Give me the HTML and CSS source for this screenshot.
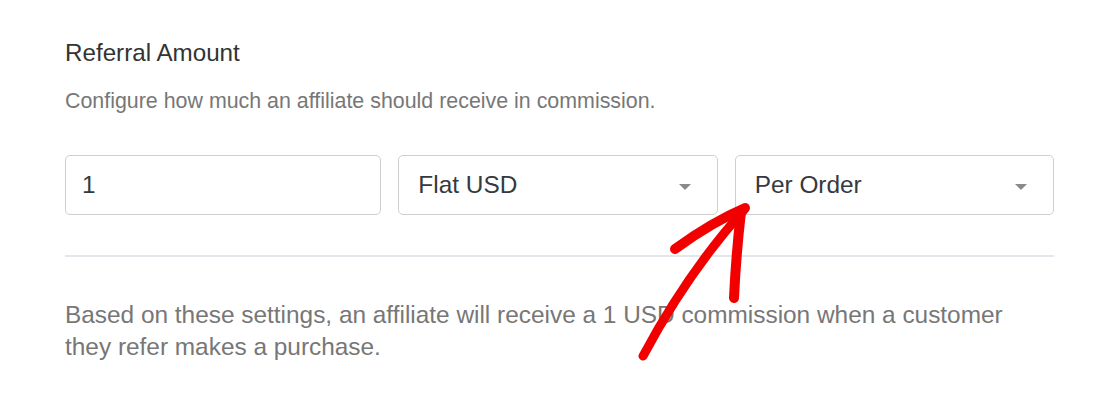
FILE: index.html
```html
<!DOCTYPE html>
<html>
<head>
<meta charset="utf-8">
<link rel="stylesheet" href="styles.css">
</head>
<body>
<div class="page">
  <h2 class="title">Referral Amount</h2>
  <p class="desc">Configure how much an affiliate should receive in commission.</p>
  <div class="fields">
    <div class="field">1</div>
    <div class="field select">Flat USD<span class="caret"></span></div>
    <div class="field select">Per Order<span class="caret"></span></div>
  </div>
  <hr class="divider">
  <p class="summary">Based on these settings, an affiliate will receive a 1 USD commission when a customer they refer makes a purchase.</p>
  <svg class="arrow" viewBox="630 195 130 175" width="130" height="175">
    <g fill="none" stroke="#f20000" stroke-linecap="round" stroke-linejoin="round">
      <path d="M643,356 Q688,272 744,210" stroke-width="9"/>
      <path d="M675,249 Q712,222 745,208" stroke-width="10"/>
      <path d="M741,212 Q736,255 734,298" stroke-width="10"/>
    </g>
  </svg>
</div>
</body>
</html>
```
FILE: styles.css
```css
html, body {
  margin: 0;
  padding: 0;
  background: #fff;
}
body {
  font-family: "Liberation Sans", Arial, sans-serif;
}
.page {
  position: relative;
  width: 989px;
  padding: 39px 0 0 65px;
}
.title {
  margin: 0;
  font-size: 24.2px;
  line-height: 28px;
  font-weight: normal;
  color: #333;
}
.desc {
  margin: 21px 0 0;
  font-size: 21.4px;
  line-height: 26px;
  color: #777;
}
.fields {
  display: flex;
  gap: 17px;
  margin-top: 41px;
}
.field {
  position: relative;
  flex: 1;
  box-sizing: border-box;
  height: 60px;
  border: 1px solid #cdd0d3;
  border-radius: 5px;
  padding: 0 16px;
  display: flex;
  align-items: center;
  font-size: 24.4px;
  color: #343a40;
}
.select {
  padding-left: 19px;
}
.caret {
  position: absolute;
  right: 26px;
  top: 28px;
  width: 0;
  height: 0;
  border-left: 6px solid transparent;
  border-right: 6px solid transparent;
  border-top: 6px solid #8a8a8a;
}
.divider {
  margin: 40px 0 0;
  border: 0;
  height: 2px;
  background: #e3e6ea;
}
.summary {
  margin: 42px 0 0;
  font-size: 24.4px;
  line-height: 32px;
  color: #777;
}
.arrow {
  position: absolute;
  left: 630px;
  top: 195px;
}
```
